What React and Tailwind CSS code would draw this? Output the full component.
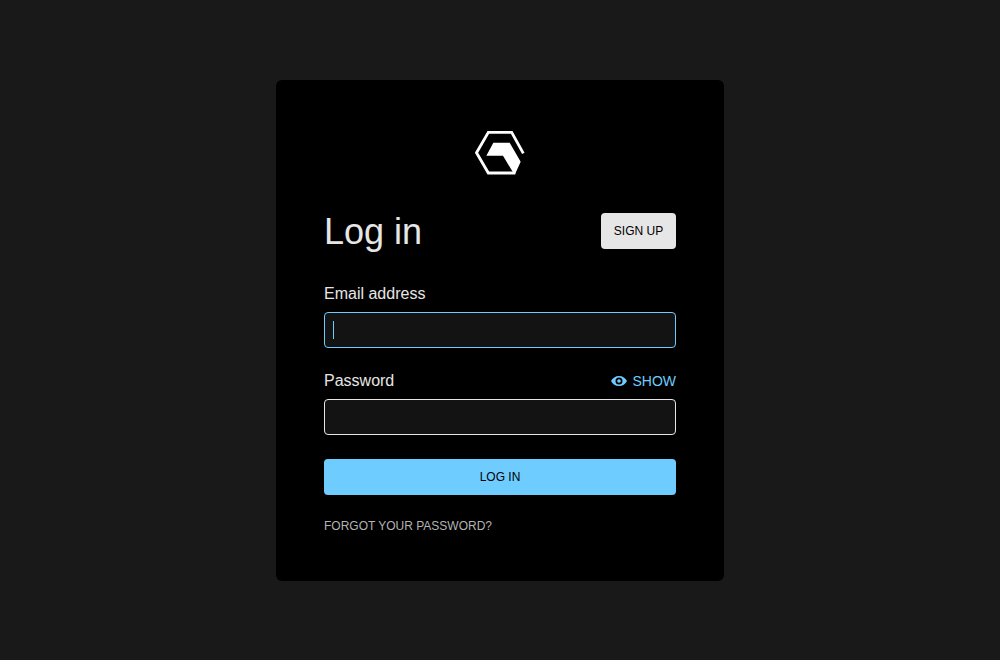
function Logo() {
  return (
    <svg className="mx-auto block h-14 w-[60px] shrink-0" viewBox="0 0 180 168" fill="none" aria-hidden="true">
      <path d="M160 88L125 25H55L19.500 86.500L55 147H136" stroke="#fff" strokeWidth="8.500" />
      <path d="M70 56H119L152 113L135 151L127 142L99 95H49Z" fill="#fff" />
    </svg>
  );
}

function EyeIcon() {
  return (
    <svg className="block h-4 w-4" viewBox="0 0 16 16" aria-hidden="true">
      <path
        fill="currentColor"
        fillRule="evenodd"
        d="M8 3C4.400 3 1.500 5 0 8c1.500 3 4.400 5 8 5s6.500-2 8-5c-1.500-3-4.400-5-8-5ZM8 4.500a3.500 3.500 0 1 1 0 7 3.500 3.500 0 0 1 0-7ZM8 6.200a1.800 1.800 0 1 0 0 3.600 1.800 1.800 0 0 0 0-3.600Z"
      />
    </svg>
  );
}

export default function App() {
  return (
    <main className="flex h-screen justify-center bg-[#191919] pt-20 font-['Liberation_Sans',Arial,sans-serif] text-[#e6e6e6]">
      <section className="flex h-[501px] w-[448px] flex-col rounded-md bg-black px-12 pt-11">
        <Logo />
        <header className="mt-[33px] flex h-9 items-center justify-between">
          <h1 className="pt-0.5 text-4xl leading-9">Log in</h1>
          <button type="button" className="h-9 w-[75px] rounded bg-[#e6e6e6] text-xs text-black">SIGN UP</button>
        </header>
        <label className="mt-[33px] h-6 text-base" htmlFor="email">Email address</label>
        <div id="email" className="mt-1.5 flex h-9 shrink-0 items-center rounded border border-[#6fccff] bg-[#131313] px-2">
          <span className="h-[18px] w-px bg-[#6fccff]" />
        </div>
        <div className="mt-[21px] flex h-6 items-center justify-between">
          <label className="text-base" htmlFor="password">Password</label>
          <button type="button" className="flex items-center gap-[5px] text-sm text-[#6fccff]">
            <EyeIcon />
            SHOW
          </button>
        </div>
        <div id="password" className="mt-1.5 h-9 shrink-0 rounded border border-[#e6e6e6] bg-[#131313]" />
        <button type="button" className="mt-6 h-9 shrink-0 rounded bg-[#6fccff] text-xs text-black">LOG IN</button>
        <a className="mt-[23px] self-start text-xs text-[#b3b3b3]">FORGOT YOUR PASSWORD?</a>
      </section>
    </main>
  );
}
